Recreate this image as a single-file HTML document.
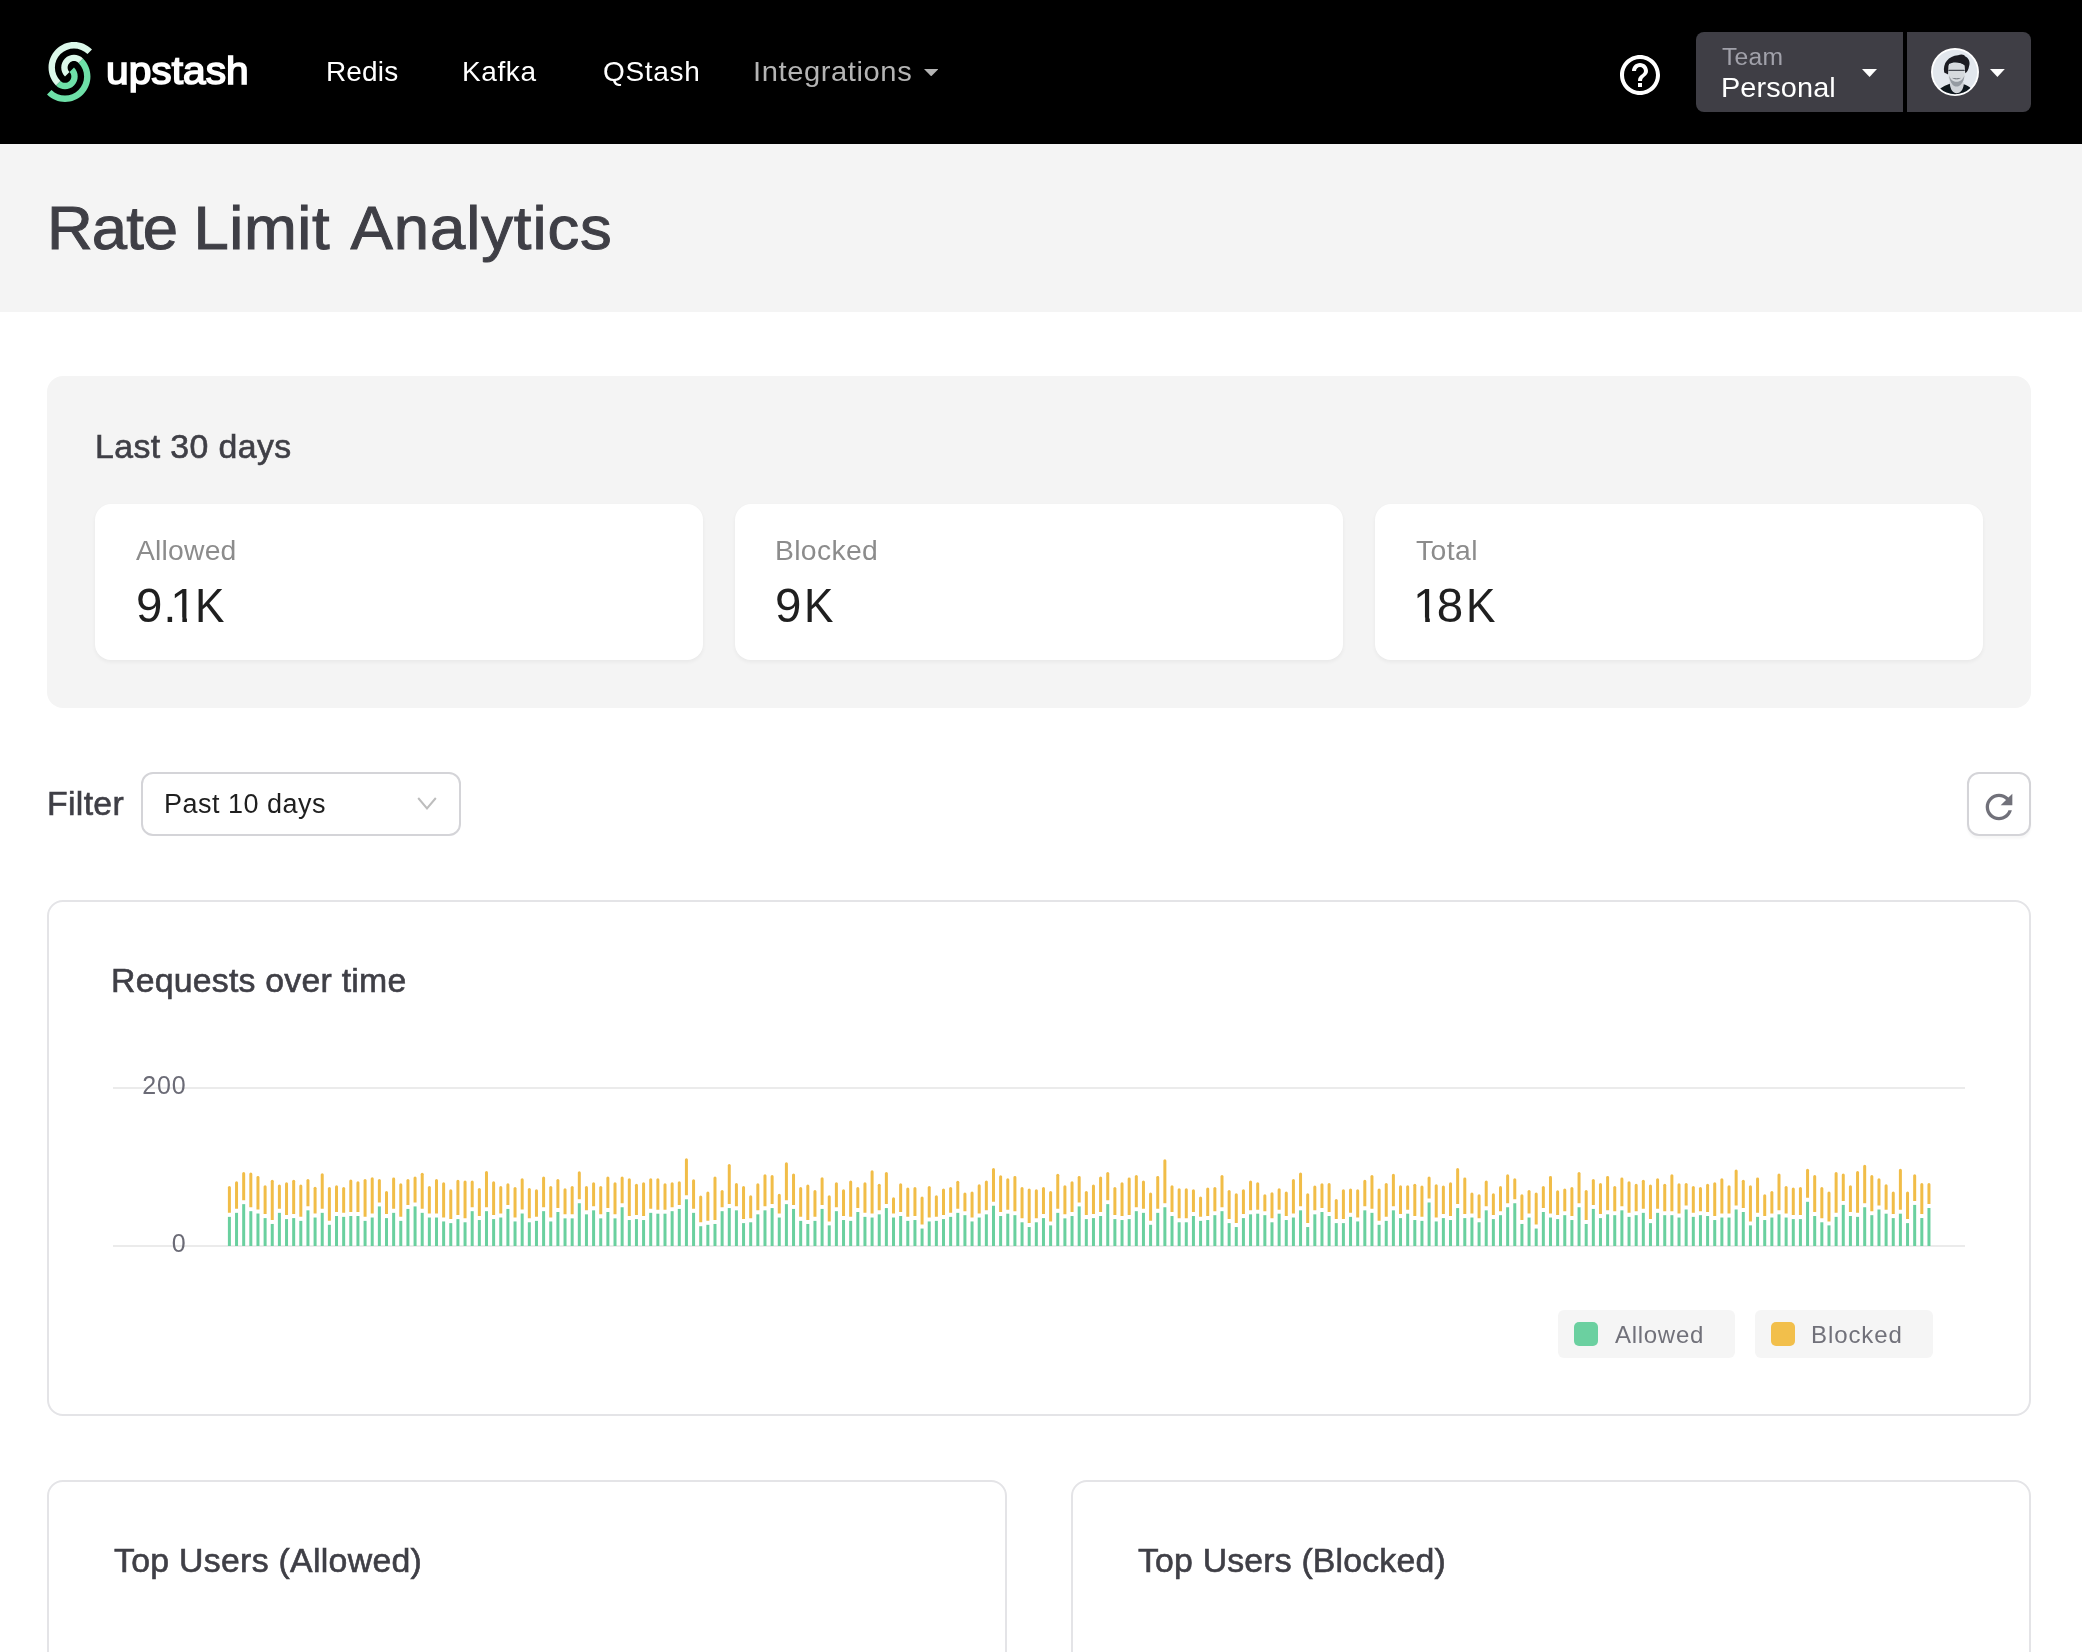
<!DOCTYPE html>
<html lang="en">
<head>
<meta charset="utf-8">
<title>Rate Limit Analytics</title>
<style>
*{box-sizing:border-box;margin:0;padding:0}
html,body{width:2082px;height:1652px;overflow:hidden;background:#fff}
body{font-family:"Liberation Sans",Arial,sans-serif;color:#3f3f46;position:relative}
.abs{position:absolute;white-space:nowrap;line-height:1;will-change:transform}
#nav{position:absolute;left:0;top:0;width:2082px;height:144px;background:#000}
#hdr{position:absolute;left:0;top:144px;width:2082px;height:168px;background:#f4f4f4}
#panel{position:absolute;left:47px;top:376px;width:1984px;height:332px;background:#f4f4f4;border-radius:16px}
.card{position:absolute;top:504px;width:608px;height:156px;background:#fff;border-radius:16px;box-shadow:0 2px 4px rgba(0,0,0,.05)}
.cval{font-size:47.5px;color:#1f1f1f;top:581.8px}
#v1a{letter-spacing:.9px}#v1b{letter-spacing:-6.4px}#v1c{letter-spacing:-1.9px}
#v2a{letter-spacing:2.7px}
#v3a{letter-spacing:-2.8px}#v3b{letter-spacing:2.5px}
#v1d,#v2b,#v3c{display:inline-block;transform:scaleX(.93);transform-origin:0 0}
#v1c,#v3a{display:inline-block;clip-path:polygon(0 0,100% 0,100% 35.4px,16.8px 35.4px,16.8px 100%,12.2px 100%,12.2px 35.4px,0 35.4px)}
.box{position:absolute;border:2px solid #e4e4e7;border-radius:16px;background:#fff}
.leg{position:absolute;top:1310px;height:48px;background:#f5f5f5;border-radius:6px}
.sw{position:absolute;left:16px;top:12px;width:24px;height:24px;border-radius:5px}
h1,h2,h3{font-weight:400}a{text-decoration:none}
</style>
</head>
<body>
<header id="nav">
<svg class="abs" style="left:47px;top:42px" width="45" height="60" viewBox="0 0 256 341">
<path d="M0 298.417c56.554 56.553 148.247 56.553 204.801 0 56.554-56.554 56.554-148.247 0-204.801l-25.6 25.6c42.415 42.416 42.415 111.185 0 153.6-42.416 42.416-111.185 42.416-153.601 0L0 298.416Z" fill="#6ee0a8"/>
<path d="M51.2 247.216c28.277 28.277 74.123 28.277 102.4 0 28.277-28.276 28.277-74.123 0-102.4l-25.6 25.6c14.14 14.138 14.14 37.061 0 51.2-14.138 14.139-37.061 14.139-51.2 0l-25.6 25.6Z" fill="#6ee0a8"/>
<path d="M256 42.415c-56.554-56.553-148.247-56.553-204.8 0-56.555 56.555-56.555 148.247 0 204.801l25.599-25.6c-42.415-42.415-42.415-111.185 0-153.6 42.416-42.416 111.185-42.416 153.6 0L256 42.416Z" fill="#dcf8ea"/>
<path d="M204.8 93.616c-28.276-28.277-74.124-28.277-102.4 0-28.278 28.277-28.278 74.123 0 102.4l25.6-25.6c-14.14-14.138-14.14-37.061 0-51.2 14.138-14.139 37.06-14.139 51.2 0l25.6-25.6Z" fill="#dcf8ea"/>
</svg>
<a class="abs" id="t_brand" style="left:106.00px;top:51.83px;font-size:38px;color:#fff;letter-spacing:0.03px;transform:scaleX(1.07);transform-origin:0 0;-webkit-text-stroke:1.6px #fff">upstash</a>
<nav>
<a class="abs" id="t_Redis" style="left:326.40px;top:57.80px;font-size:28px;color:#fff;letter-spacing:0.15px">Redis</a>
<a class="abs" id="t_Kafka" style="left:462.20px;top:57.80px;font-size:28px;color:#fff;letter-spacing:0.60px">Kafka</a>
<a class="abs" id="t_QStash" style="left:602.80px;top:57.80px;font-size:28px;color:#fff;letter-spacing:0.67px">QStash</a>
<a class="abs" id="t_Integr" style="left:753.40px;top:57.80px;font-size:28px;color:#b4b4b4;letter-spacing:0.57px;transform:scaleX(1.04);transform-origin:0 0">Integrations</a>
<svg class="abs" style="left:923.9px;top:68.8px" width="14.4" height="7.3" viewBox="0 0 14.4 7.3"><path d="M0 0H14.4L7.20 7.3z" fill="#b4b4b4"/></svg>
</nav>
<svg class="abs" style="left:1616px;top:51px" width="48" height="48" viewBox="0 0 24 24"><path fill="#fff" d="M11 18h2v-2h-2v2zm1-16C6.480 2 2 6.480 2 12s4.480 10 10 10 10-4.480 10-10S17.520 2 12 2zm0 18c-4.410 0-8-3.590-8-8s3.590-8 8-8 8 3.590 8 8-3.590 8-8 8zm0-14c-2.210 0-4 1.790-4 4h2c0-1.100.9-2 2-2s2 .9 2 2c0 2-3 1.750-3 5h2c0-2.250 3-2.500 3-5 0-2.210-1.790-4-4-4z"/></svg>
<div class="abs" style="left:1696px;top:32px;width:207px;height:80px;background:#3f3e45;border-radius:8px 0 0 8px"></div>
<span class="abs" id="t_Team" style="left:1721.80px;top:45.61px;font-size:23.5px;color:#a1a1aa;letter-spacing:0.24px;transform:scaleX(1.05);transform-origin:0 0">Team</span>
<span class="abs" id="t_Personal" style="left:1720.60px;top:74.32px;font-size:27.5px;color:#fff;letter-spacing:0.11px;transform:scaleX(1.05);transform-origin:0 0">Personal</span>
<svg class="abs" style="left:1861.5px;top:68.5px" width="15.1" height="7.9" viewBox="0 0 15.1 7.9"><path d="M0 0H15.1L7.55 7.9z" fill="#fff"/></svg>
<div class="abs" style="left:1907px;top:32px;width:124px;height:80px;background:#3f3e45;border-radius:0 8px 8px 0"></div>
<svg class="abs" style="left:1931px;top:48px" width="48" height="48" viewBox="0 0 48 48">
<defs><clipPath id="av"><circle cx="24" cy="24" r="22.2"/></clipPath><filter id="bl" x="-20%" y="-20%" width="140%" height="140%"><feGaussianBlur stdDeviation=".65"/></filter></defs>
<circle cx="24" cy="24" r="24" fill="#fff"/>
<g clip-path="url(#av)">
<rect width="48" height="48" fill="#e2e7ed"/>
<g filter="url(#bl)">
<path d="M18.500 34 L32.500 34 L33.500 44 C29 47 22 47 17.500 44Z" fill="#cfd3d8"/>
<path d="M5 49 C6 41.500 12 38 18.800 35.800 C19.500 42 22 45.200 25.500 45.200 C29 45.200 32.300 42 32.800 36.200 C38.500 38 42.500 41.500 43.500 49Z" fill="#0f141a"/>
<path d="M13.200 24.500 C11.500 15 17.500 8.200 27 7.300 C31 5.800 33.500 7 34 8.300 C38 10 39.500 14.500 38 18.500 C37.500 21.500 36 24.500 34.300 25.300 L33.300 17.500 C30 14 22 13.500 18 16 L17.200 26.500 Z" fill="#1b1e24"/>
<path d="M17.500 17.500 C20 14 30.500 14 33.500 17.500 L33.600 27 C33.600 34 29 38.600 25.300 38.600 C21.500 38.600 17.400 34 17.400 27 Z" fill="#d6dade"/>
<path d="M18 27.500 C19 35.500 22.500 38.600 25.400 38.600 C29 38.600 32.800 35 33.400 27.500 C31.500 32.500 28.500 33.800 25.600 33.800 C22.500 33.800 20 32.500 18 27.500Z" fill="#7f858d" opacity=".75"/>
<path d="M21 29.800 C23.500 31.800 27.500 31.800 30 29.800 C28 30.600 23 30.600 21 29.800Z" fill="#5d636b"/>
<rect x="17.300" y="21.700" width="16.400" height="1.300" rx=".5" fill="#4a4e55"/>

</g></g></svg>
<svg class="abs" style="left:1989.5px;top:68.5px" width="14.8" height="7.9" viewBox="0 0 14.8 7.9"><path d="M0 0H14.8L7.40 7.9z" fill="#fff"/></svg>
</header>
<div id="hdr"></div>
<h1 class="abs" id="t_title" style="left:46.60px;top:198.36px;font-size:61px;color:#3f3f46;letter-spacing:0.66px;transform:scaleX(1.04);transform-origin:0 0;-webkit-text-stroke:1.0px #3f3f46"><span style="letter-spacing:-0.94px">Rate</span> <span style="letter-spacing:0.54px;margin-left:-1.92px">Limit</span> <span style="letter-spacing:0.90px;margin-left:1.92px">Analytics</span></h1>
<main>
<section>
<div id="panel"></div>
<h2 class="abs" id="t_last30" style="left:95.00px;top:431.39px;font-size:32.5px;color:#3f3f46;letter-spacing:0.40px;transform:scaleX(1.04);transform-origin:0 0;-webkit-text-stroke:0.6px #3f3f46">Last 30 days</h2>
<div class="card" style="left:95px"></div>
<div class="abs" id="t_Allowed" style="left:136.40px;top:536.52px;font-size:27.5px;color:#8c8c8c;letter-spacing:0.19px;transform:scaleX(1.03);transform-origin:0 0">Allowed</div>
<div class="abs cval" id="v1" style="left:135.6px"><span id="v1a">9</span><span id="v1b">.</span><span id="v1c">1</span><span id="v1d">K</span></div>
<div class="card" style="left:735px"></div>
<div class="abs" id="t_Blocked" style="left:774.60px;top:536.52px;font-size:27.5px;color:#8c8c8c;letter-spacing:0.33px;transform:scaleX(1.03);transform-origin:0 0">Blocked</div>
<div class="abs cval" id="v2" style="left:775.3px"><span id="v2a">9</span><span id="v2b">K</span></div>
<div class="card" style="left:1375px"></div>
<div class="abs" id="t_Total" style="left:1415.80px;top:536.52px;font-size:27.5px;color:#8c8c8c;letter-spacing:0.41px;transform:scaleX(1.03);transform-origin:0 0">Total</div>
<div class="abs cval" id="v3" style="left:1413px"><span id="v3a">1</span><span id="v3b">8</span><span id="v3c">K</span></div>
</section>
<section>
<label class="abs" id="t_Filter" style="left:46.80px;top:787.89px;font-size:32.5px;color:#3f3f46;letter-spacing:0.31px;transform:scaleX(1.04);transform-origin:0 0;-webkit-text-stroke:0.6px #3f3f46">Filter</label>
<div class="box" style="left:141px;top:772px;width:320px;height:64px;border-color:#d4d4d8;border-radius:12px"></div>
<span class="abs" id="t_Past" style="left:164.40px;top:791.04px;font-size:27px;color:#1f1f1f;letter-spacing:0.50px">Past 10 days</span>
<svg class="abs" style="left:416.8px;top:797.2px" width="21" height="15" viewBox="0 0 21 15"><path d="M1.2 1 L10 11.5 L18.8 1" fill="none" stroke="#bdbdbd" stroke-width="2" stroke-linejoin="miter"/></svg>
<div class="box" style="left:1967px;top:772px;width:64px;height:64px;border-color:#d4d4d8;border-radius:12px;box-shadow:0 3px 2px rgba(0,0,0,.03)"></div>
<svg class="abs" style="left:1979px;top:787px" width="40" height="40" viewBox="0 0 24 24"><path fill="#71717a" d="M17.65 6.35C16.2 4.9 14.21 4 12 4c-4.420 0-7.990 3.580-7.990 8s3.570 8 7.990 8c3.730 0 6.840-2.550 7.730-6h-2.080c-.82 2.330-3.040 4-5.650 4-3.310 0-6-2.690-6-6s2.690-6 6-6c1.660 0 3.140.69 4.220 1.780L13 11h7V4l-2.350 2.350z"/></svg>
</section>
<section>
<div class="box" style="left:47px;top:900px;width:1984px;height:516px"></div>
<h2 class="abs" id="t_Requests" style="left:111.20px;top:965.39px;font-size:32.5px;color:#3f3f46;letter-spacing:0.23px;transform:scaleX(1.04);transform-origin:0 0;-webkit-text-stroke:0.6px #3f3f46">Requests over time</h2>
<svg class="abs" id="chart" style="left:0;top:1040px" width="2082" height="260" viewBox="0 1040 2082 260">
<rect x="113" y="1087" width="1852" height="2" fill="#ebebeb"/>
<rect x="113" y="1245" width="1852" height="2" fill="#ebebeb"/>
<text x="186.6" y="1094.4" text-anchor="end" font-size="25" fill="#6b6b76" letter-spacing="0.9">200</text>
<text x="185.7" y="1252.3" text-anchor="end" font-size="25" fill="#6b6b76">0</text>
<g id="bars"><g fill="#6ad09f"><rect x="227.90" y="1216.86" width="3" height="29.14"/><rect x="235.04" y="1212.84" width="3" height="33.16"/><rect x="242.18" y="1204.15" width="3" height="41.85"/><rect x="249.32" y="1211.17" width="3" height="34.83"/><rect x="256.46" y="1213.51" width="3" height="32.49"/><rect x="263.61" y="1218.11" width="3" height="27.89"/><rect x="270.75" y="1223.96" width="3" height="22.04"/><rect x="277.89" y="1212.84" width="3" height="33.16"/><rect x="285.03" y="1219.11" width="3" height="26.89"/><rect x="292.17" y="1218.11" width="3" height="27.89"/><rect x="299.31" y="1220.87" width="3" height="25.13"/><rect x="306.45" y="1210.34" width="3" height="35.66"/><rect x="313.59" y="1217.52" width="3" height="28.48"/><rect x="320.73" y="1212.84" width="3" height="33.16"/><rect x="327.87" y="1224.80" width="3" height="21.20"/><rect x="335.01" y="1216.02" width="3" height="29.98"/><rect x="342.16" y="1216.86" width="3" height="29.14"/><rect x="349.30" y="1216.02" width="3" height="29.98"/><rect x="356.44" y="1216.02" width="3" height="29.98"/><rect x="363.58" y="1220.87" width="3" height="25.13"/><rect x="370.72" y="1217.52" width="3" height="28.48"/><rect x="377.86" y="1206.41" width="3" height="39.59"/><rect x="385.00" y="1218.11" width="3" height="27.89"/><rect x="392.14" y="1212.84" width="3" height="33.16"/><rect x="399.28" y="1220.87" width="3" height="25.13"/><rect x="406.43" y="1208.92" width="3" height="37.08"/><rect x="413.57" y="1206.41" width="3" height="39.59"/><rect x="420.71" y="1212.84" width="3" height="33.16"/><rect x="427.85" y="1217.52" width="3" height="28.48"/><rect x="434.99" y="1217.52" width="3" height="28.48"/><rect x="442.13" y="1221.45" width="3" height="24.55"/><rect x="449.27" y="1223.12" width="3" height="22.88"/><rect x="456.41" y="1219.11" width="3" height="26.89"/><rect x="463.55" y="1222.29" width="3" height="23.71"/><rect x="470.69" y="1211.17" width="3" height="34.83"/><rect x="477.84" y="1220.03" width="3" height="25.97"/><rect x="484.98" y="1211.17" width="3" height="34.83"/><rect x="492.12" y="1219.11" width="3" height="26.89"/><rect x="499.26" y="1217.52" width="3" height="28.48"/><rect x="506.40" y="1208.92" width="3" height="37.08"/><rect x="513.54" y="1221.45" width="3" height="24.55"/><rect x="520.68" y="1213.51" width="3" height="32.49"/><rect x="527.82" y="1222.29" width="3" height="23.71"/><rect x="534.96" y="1220.87" width="3" height="25.13"/><rect x="542.10" y="1211.17" width="3" height="34.83"/><rect x="549.25" y="1221.45" width="3" height="24.55"/><rect x="556.39" y="1212.01" width="3" height="33.99"/><rect x="563.53" y="1218.36" width="3" height="27.64"/><rect x="570.67" y="1218.36" width="3" height="27.64"/><rect x="577.81" y="1203.23" width="3" height="42.77"/><rect x="584.95" y="1214.35" width="3" height="31.65"/><rect x="592.09" y="1210.34" width="3" height="35.66"/><rect x="599.23" y="1218.36" width="3" height="27.64"/><rect x="606.37" y="1212.01" width="3" height="33.99"/><rect x="613.51" y="1218.36" width="3" height="27.64"/><rect x="620.65" y="1207.25" width="3" height="38.75"/><rect x="627.80" y="1220.03" width="3" height="25.97"/><rect x="634.94" y="1219.11" width="3" height="26.89"/><rect x="642.08" y="1220.03" width="3" height="25.97"/><rect x="649.22" y="1212.84" width="3" height="33.16"/><rect x="656.36" y="1213.68" width="3" height="32.32"/><rect x="663.50" y="1213.68" width="3" height="32.32"/><rect x="670.64" y="1211.17" width="3" height="34.83"/><rect x="677.78" y="1208.92" width="3" height="37.08"/><rect x="684.92" y="1199.31" width="3" height="46.69"/><rect x="692.07" y="1212.84" width="3" height="33.16"/><rect x="699.21" y="1226.22" width="3" height="19.78"/><rect x="706.35" y="1224.80" width="3" height="21.20"/><rect x="713.49" y="1223.96" width="3" height="22.04"/><rect x="720.63" y="1211.17" width="3" height="34.83"/><rect x="727.77" y="1208.08" width="3" height="37.92"/><rect x="734.91" y="1210.34" width="3" height="35.66"/><rect x="742.05" y="1223.12" width="3" height="22.88"/><rect x="749.19" y="1222.29" width="3" height="23.71"/><rect x="756.33" y="1214.35" width="3" height="31.65"/><rect x="763.48" y="1210.34" width="3" height="35.66"/><rect x="770.62" y="1208.08" width="3" height="37.92"/><rect x="777.76" y="1217.52" width="3" height="28.48"/><rect x="784.90" y="1204.15" width="3" height="41.85"/><rect x="792.04" y="1208.92" width="3" height="37.08"/><rect x="799.18" y="1220.87" width="3" height="25.13"/><rect x="806.32" y="1223.96" width="3" height="22.04"/><rect x="813.46" y="1220.87" width="3" height="25.13"/><rect x="820.60" y="1208.92" width="3" height="37.08"/><rect x="827.74" y="1225.38" width="3" height="20.62"/><rect x="834.88" y="1211.17" width="3" height="34.83"/><rect x="842.03" y="1220.03" width="3" height="25.97"/><rect x="849.17" y="1220.87" width="3" height="25.13"/><rect x="856.31" y="1212.01" width="3" height="33.99"/><rect x="863.45" y="1216.86" width="3" height="29.14"/><rect x="870.59" y="1217.52" width="3" height="28.48"/><rect x="877.73" y="1214.35" width="3" height="31.65"/><rect x="884.87" y="1208.08" width="3" height="37.92"/><rect x="892.01" y="1217.52" width="3" height="28.48"/><rect x="899.15" y="1216.02" width="3" height="29.98"/><rect x="906.29" y="1220.87" width="3" height="25.13"/><rect x="913.44" y="1220.03" width="3" height="25.97"/><rect x="920.58" y="1228.56" width="3" height="17.44"/><rect x="927.72" y="1221.45" width="3" height="24.55"/><rect x="934.86" y="1220.87" width="3" height="25.13"/><rect x="942.00" y="1219.11" width="3" height="26.89"/><rect x="949.14" y="1216.86" width="3" height="29.14"/><rect x="956.28" y="1212.84" width="3" height="33.16"/><rect x="963.42" y="1215.18" width="3" height="30.82"/><rect x="970.56" y="1221.45" width="3" height="24.55"/><rect x="977.70" y="1217.52" width="3" height="28.48"/><rect x="984.85" y="1214.35" width="3" height="31.65"/><rect x="991.99" y="1205.74" width="3" height="40.26"/><rect x="999.13" y="1216.02" width="3" height="29.98"/><rect x="1006.27" y="1213.68" width="3" height="32.32"/><rect x="1013.41" y="1215.18" width="3" height="30.82"/><rect x="1020.55" y="1222.29" width="3" height="23.71"/><rect x="1027.69" y="1227.05" width="3" height="18.95"/><rect x="1034.83" y="1222.29" width="3" height="23.71"/><rect x="1041.97" y="1218.11" width="3" height="27.89"/><rect x="1049.12" y="1225.38" width="3" height="20.62"/><rect x="1056.26" y="1212.84" width="3" height="33.16"/><rect x="1063.40" y="1218.36" width="3" height="27.64"/><rect x="1070.54" y="1216.02" width="3" height="29.98"/><rect x="1077.68" y="1206.41" width="3" height="39.59"/><rect x="1084.82" y="1219.11" width="3" height="26.89"/><rect x="1091.96" y="1218.11" width="3" height="27.89"/><rect x="1099.10" y="1216.02" width="3" height="29.98"/><rect x="1106.24" y="1204.15" width="3" height="41.85"/><rect x="1113.38" y="1219.11" width="3" height="26.89"/><rect x="1120.53" y="1220.03" width="3" height="25.97"/><rect x="1127.67" y="1219.11" width="3" height="26.89"/><rect x="1134.81" y="1211.17" width="3" height="34.83"/><rect x="1141.95" y="1212.84" width="3" height="33.16"/><rect x="1149.09" y="1224.80" width="3" height="21.20"/><rect x="1156.23" y="1212.84" width="3" height="33.16"/><rect x="1163.37" y="1207.25" width="3" height="38.75"/><rect x="1170.51" y="1216.02" width="3" height="29.98"/><rect x="1177.65" y="1222.29" width="3" height="23.71"/><rect x="1184.79" y="1222.29" width="3" height="23.71"/><rect x="1191.93" y="1216.02" width="3" height="29.98"/><rect x="1199.08" y="1220.87" width="3" height="25.13"/><rect x="1206.22" y="1220.03" width="3" height="25.97"/><rect x="1213.36" y="1215.18" width="3" height="30.82"/><rect x="1220.50" y="1211.17" width="3" height="34.83"/><rect x="1227.64" y="1223.12" width="3" height="22.88"/><rect x="1234.78" y="1227.05" width="3" height="18.95"/><rect x="1241.92" y="1218.11" width="3" height="27.89"/><rect x="1249.06" y="1214.35" width="3" height="31.65"/><rect x="1256.20" y="1213.68" width="3" height="32.32"/><rect x="1263.35" y="1215.18" width="3" height="30.82"/><rect x="1270.49" y="1222.29" width="3" height="23.71"/><rect x="1277.63" y="1213.68" width="3" height="32.32"/><rect x="1284.77" y="1220.03" width="3" height="25.97"/><rect x="1291.91" y="1217.52" width="3" height="28.48"/><rect x="1299.05" y="1210.34" width="3" height="35.66"/><rect x="1306.19" y="1227.05" width="3" height="18.95"/><rect x="1313.33" y="1214.35" width="3" height="31.65"/><rect x="1320.47" y="1212.01" width="3" height="33.99"/><rect x="1327.61" y="1216.02" width="3" height="29.98"/><rect x="1334.76" y="1223.12" width="3" height="22.88"/><rect x="1341.90" y="1223.12" width="3" height="22.88"/><rect x="1349.04" y="1216.86" width="3" height="29.14"/><rect x="1356.18" y="1221.45" width="3" height="24.55"/><rect x="1363.32" y="1210.34" width="3" height="35.66"/><rect x="1370.46" y="1212.84" width="3" height="33.16"/><rect x="1377.60" y="1224.80" width="3" height="21.20"/><rect x="1384.74" y="1220.87" width="3" height="25.13"/><rect x="1391.88" y="1210.34" width="3" height="35.66"/><rect x="1399.02" y="1218.11" width="3" height="27.89"/><rect x="1406.17" y="1213.68" width="3" height="32.32"/><rect x="1413.31" y="1220.03" width="3" height="25.97"/><rect x="1420.45" y="1220.87" width="3" height="25.13"/><rect x="1427.59" y="1202.48" width="3" height="43.52"/><rect x="1434.73" y="1221.45" width="3" height="24.55"/><rect x="1441.87" y="1218.11" width="3" height="27.89"/><rect x="1449.01" y="1220.03" width="3" height="25.97"/><rect x="1456.15" y="1208.08" width="3" height="37.92"/><rect x="1463.29" y="1218.11" width="3" height="27.89"/><rect x="1470.43" y="1217.52" width="3" height="28.48"/><rect x="1477.58" y="1222.29" width="3" height="23.71"/><rect x="1484.72" y="1210.34" width="3" height="35.66"/><rect x="1491.86" y="1219.11" width="3" height="26.89"/><rect x="1499.00" y="1215.18" width="3" height="30.82"/><rect x="1506.14" y="1207.25" width="3" height="38.75"/><rect x="1513.28" y="1203.23" width="3" height="42.77"/><rect x="1520.42" y="1223.96" width="3" height="22.04"/><rect x="1527.56" y="1217.52" width="3" height="28.48"/><rect x="1534.70" y="1228.56" width="3" height="17.44"/><rect x="1541.84" y="1212.01" width="3" height="33.99"/><rect x="1548.99" y="1217.52" width="3" height="28.48"/><rect x="1556.13" y="1219.11" width="3" height="26.89"/><rect x="1563.27" y="1215.18" width="3" height="30.82"/><rect x="1570.41" y="1220.03" width="3" height="25.97"/><rect x="1577.55" y="1207.25" width="3" height="38.75"/><rect x="1584.69" y="1223.96" width="3" height="22.04"/><rect x="1591.83" y="1208.92" width="3" height="37.08"/><rect x="1598.97" y="1218.11" width="3" height="27.89"/><rect x="1606.11" y="1214.35" width="3" height="31.65"/><rect x="1613.25" y="1215.18" width="3" height="30.82"/><rect x="1620.39" y="1210.34" width="3" height="35.66"/><rect x="1627.54" y="1216.86" width="3" height="29.14"/><rect x="1634.68" y="1215.18" width="3" height="30.82"/><rect x="1641.82" y="1212.84" width="3" height="33.16"/><rect x="1648.96" y="1223.12" width="3" height="22.88"/><rect x="1656.10" y="1212.84" width="3" height="33.16"/><rect x="1663.24" y="1215.18" width="3" height="30.82"/><rect x="1670.38" y="1215.18" width="3" height="30.82"/><rect x="1677.52" y="1217.52" width="3" height="28.48"/><rect x="1684.66" y="1209.50" width="3" height="36.50"/><rect x="1691.81" y="1216.86" width="3" height="29.14"/><rect x="1698.95" y="1215.18" width="3" height="30.82"/><rect x="1706.09" y="1216.02" width="3" height="29.98"/><rect x="1713.23" y="1220.03" width="3" height="25.97"/><rect x="1720.37" y="1217.52" width="3" height="28.48"/><rect x="1727.51" y="1217.52" width="3" height="28.48"/><rect x="1734.65" y="1209.50" width="3" height="36.50"/><rect x="1741.79" y="1212.01" width="3" height="33.99"/><rect x="1748.93" y="1225.38" width="3" height="20.62"/><rect x="1756.07" y="1216.86" width="3" height="29.14"/><rect x="1763.22" y="1220.03" width="3" height="25.97"/><rect x="1770.36" y="1217.52" width="3" height="28.48"/><rect x="1777.50" y="1214.35" width="3" height="31.65"/><rect x="1784.64" y="1217.52" width="3" height="28.48"/><rect x="1791.78" y="1219.11" width="3" height="26.89"/><rect x="1798.92" y="1219.11" width="3" height="26.89"/><rect x="1806.06" y="1201.81" width="3" height="44.19"/><rect x="1813.20" y="1216.02" width="3" height="29.98"/><rect x="1820.34" y="1222.29" width="3" height="23.71"/><rect x="1827.48" y="1225.38" width="3" height="20.62"/><rect x="1834.62" y="1216.86" width="3" height="29.14"/><rect x="1841.77" y="1204.91" width="3" height="41.09"/><rect x="1848.91" y="1216.02" width="3" height="29.98"/><rect x="1856.05" y="1216.86" width="3" height="29.14"/><rect x="1863.19" y="1207.25" width="3" height="38.75"/><rect x="1870.33" y="1215.18" width="3" height="30.82"/><rect x="1877.47" y="1209.50" width="3" height="36.50"/><rect x="1884.61" y="1213.68" width="3" height="32.32"/><rect x="1891.75" y="1218.11" width="3" height="27.89"/><rect x="1898.89" y="1213.68" width="3" height="32.32"/><rect x="1906.04" y="1223.12" width="3" height="22.88"/><rect x="1913.18" y="1204.91" width="3" height="41.09"/><rect x="1920.32" y="1218.03" width="3" height="27.97"/><rect x="1927.46" y="1208.00" width="3" height="38.00"/></g>
<g fill="#f1bd48"><path d="M227.90 1212.86V1187.60a1.5 1.5 0 0 1 3 0V1212.86z"/><path d="M235.04 1208.84V1182.84a1.5 1.5 0 0 1 3 0V1208.84z"/><path d="M242.18 1200.15V1173.40a1.5 1.5 0 0 1 3 0V1200.15z"/><path d="M249.32 1207.17V1174.06a1.5 1.5 0 0 1 3 0V1207.17z"/><path d="M256.46 1209.51V1177.41a1.5 1.5 0 0 1 3 0V1209.51z"/><path d="M263.61 1214.11V1186.77a1.5 1.5 0 0 1 3 0V1214.11z"/><path d="M270.75 1219.96V1181.33a1.5 1.5 0 0 1 3 0V1219.96z"/><path d="M277.89 1208.84V1185.93a1.5 1.5 0 0 1 3 0V1208.84z"/><path d="M285.03 1215.11V1183.67a1.5 1.5 0 0 1 3 0V1215.11z"/><path d="M292.17 1214.11V1181.33a1.5 1.5 0 0 1 3 0V1214.11z"/><path d="M299.31 1216.87V1186.01a1.5 1.5 0 0 1 3 0V1216.87z"/><path d="M306.45 1206.34V1180.50a1.5 1.5 0 0 1 3 0V1206.34z"/><path d="M313.59 1213.52V1188.27a1.5 1.5 0 0 1 3 0V1213.52z"/><path d="M320.73 1208.84V1174.73a1.5 1.5 0 0 1 3 0V1208.84z"/><path d="M327.87 1220.80V1188.44a1.5 1.5 0 0 1 3 0V1220.80z"/><path d="M335.01 1212.02V1186.77a1.5 1.5 0 0 1 3 0V1212.02z"/><path d="M342.16 1212.86V1188.44a1.5 1.5 0 0 1 3 0V1212.86z"/><path d="M349.30 1212.02V1180.92a1.5 1.5 0 0 1 3 0V1212.02z"/><path d="M356.44 1212.02V1182.84a1.5 1.5 0 0 1 3 0V1212.02z"/><path d="M363.58 1216.87V1180.50a1.5 1.5 0 0 1 3 0V1216.87z"/><path d="M370.72 1213.52V1178.74a1.5 1.5 0 0 1 3 0V1213.52z"/><path d="M377.86 1202.41V1180.50a1.5 1.5 0 0 1 3 0V1202.41z"/><path d="M385.00 1214.11V1192.45a1.5 1.5 0 0 1 3 0V1214.11z"/><path d="M392.14 1208.84V1178.91a1.5 1.5 0 0 1 3 0V1208.84z"/><path d="M399.28 1216.87V1184.68a1.5 1.5 0 0 1 3 0V1216.87z"/><path d="M406.43 1204.92V1180.50a1.5 1.5 0 0 1 3 0V1204.92z"/><path d="M413.57 1202.41V1178.08a1.5 1.5 0 0 1 3 0V1202.41z"/><path d="M420.71 1208.84V1174.23a1.5 1.5 0 0 1 3 0V1208.84z"/><path d="M427.85 1213.52V1187.60a1.5 1.5 0 0 1 3 0V1213.52z"/><path d="M434.99 1213.52V1180.50a1.5 1.5 0 0 1 3 0V1213.52z"/><path d="M442.13 1217.45V1183.67a1.5 1.5 0 0 1 3 0V1217.45z"/><path d="M449.27 1219.12V1190.78a1.5 1.5 0 0 1 3 0V1219.12z"/><path d="M456.41 1215.11V1181.33a1.5 1.5 0 0 1 3 0V1215.11z"/><path d="M463.55 1218.29V1182.00a1.5 1.5 0 0 1 3 0V1218.29z"/><path d="M470.69 1207.17V1182.00a1.5 1.5 0 0 1 3 0V1207.17z"/><path d="M477.84 1216.03V1189.52a1.5 1.5 0 0 1 3 0V1216.03z"/><path d="M484.98 1207.17V1172.56a1.5 1.5 0 0 1 3 0V1207.17z"/><path d="M492.12 1215.11V1182.84a1.5 1.5 0 0 1 3 0V1215.11z"/><path d="M499.26 1213.52V1187.60a1.5 1.5 0 0 1 3 0V1213.52z"/><path d="M506.40 1204.92V1184.68a1.5 1.5 0 0 1 3 0V1204.92z"/><path d="M513.54 1217.45V1188.44a1.5 1.5 0 0 1 3 0V1217.45z"/><path d="M520.68 1209.51V1179.75a1.5 1.5 0 0 1 3 0V1209.51z"/><path d="M527.82 1218.29V1189.52a1.5 1.5 0 0 1 3 0V1218.29z"/><path d="M534.96 1216.87V1190.78a1.5 1.5 0 0 1 3 0V1216.87z"/><path d="M542.10 1207.17V1178.08a1.5 1.5 0 0 1 3 0V1207.17z"/><path d="M549.25 1217.45V1187.60a1.5 1.5 0 0 1 3 0V1217.45z"/><path d="M556.39 1208.01V1180.50a1.5 1.5 0 0 1 3 0V1208.01z"/><path d="M563.53 1214.36V1189.78a1.5 1.5 0 0 1 3 0V1214.36z"/><path d="M570.67 1214.36V1187.60a1.5 1.5 0 0 1 3 0V1214.36z"/><path d="M577.81 1199.23V1172.81a1.5 1.5 0 0 1 3 0V1199.23z"/><path d="M584.95 1210.35V1187.60a1.5 1.5 0 0 1 3 0V1210.35z"/><path d="M592.09 1206.34V1183.67a1.5 1.5 0 0 1 3 0V1206.34z"/><path d="M599.23 1214.36V1187.60a1.5 1.5 0 0 1 3 0V1214.36z"/><path d="M606.37 1208.01V1178.08a1.5 1.5 0 0 1 3 0V1208.01z"/><path d="M613.51 1214.36V1183.67a1.5 1.5 0 0 1 3 0V1214.36z"/><path d="M620.65 1203.25V1178.08a1.5 1.5 0 0 1 3 0V1203.25z"/><path d="M627.80 1216.03V1179.75a1.5 1.5 0 0 1 3 0V1216.03z"/><path d="M634.94 1215.11V1185.35a1.5 1.5 0 0 1 3 0V1215.11z"/><path d="M642.08 1216.03V1183.67a1.5 1.5 0 0 1 3 0V1216.03z"/><path d="M649.22 1208.84V1179.75a1.5 1.5 0 0 1 3 0V1208.84z"/><path d="M656.36 1209.68V1179.75a1.5 1.5 0 0 1 3 0V1209.68z"/><path d="M663.50 1209.68V1184.68a1.5 1.5 0 0 1 3 0V1209.68z"/><path d="M670.64 1207.17V1183.67a1.5 1.5 0 0 1 3 0V1207.17z"/><path d="M677.78 1204.92V1182.84a1.5 1.5 0 0 1 3 0V1204.92z"/><path d="M684.92 1195.31V1159.86a1.5 1.5 0 0 1 3 0V1195.31z"/><path d="M692.07 1208.84V1180.75a1.5 1.5 0 0 1 3 0V1208.84z"/><path d="M699.21 1222.22V1197.05a1.5 1.5 0 0 1 3 0V1222.22z"/><path d="M706.35 1220.80V1193.03a1.5 1.5 0 0 1 3 0V1220.80z"/><path d="M713.49 1219.96V1178.08a1.5 1.5 0 0 1 3 0V1219.96z"/><path d="M720.63 1207.17V1191.61a1.5 1.5 0 0 1 3 0V1207.17z"/><path d="M727.77 1204.08V1165.46a1.5 1.5 0 0 1 3 0V1204.08z"/><path d="M734.91 1206.34V1184.51a1.5 1.5 0 0 1 3 0V1206.34z"/><path d="M742.05 1219.12V1187.60a1.5 1.5 0 0 1 3 0V1219.12z"/><path d="M749.19 1218.29V1196.63a1.5 1.5 0 0 1 3 0V1218.29z"/><path d="M756.33 1210.35V1184.68a1.5 1.5 0 0 1 3 0V1210.35z"/><path d="M763.48 1206.34V1175.74a1.5 1.5 0 0 1 3 0V1206.34z"/><path d="M770.62 1204.08V1176.57a1.5 1.5 0 0 1 3 0V1204.08z"/><path d="M777.76 1213.52V1195.37a1.5 1.5 0 0 1 3 0V1213.52z"/><path d="M784.90 1200.15V1163.78a1.5 1.5 0 0 1 3 0V1200.15z"/><path d="M792.04 1204.92V1174.90a1.5 1.5 0 0 1 3 0V1204.92z"/><path d="M799.18 1216.87V1188.44a1.5 1.5 0 0 1 3 0V1216.87z"/><path d="M806.32 1219.96V1186.01a1.5 1.5 0 0 1 3 0V1219.96z"/><path d="M813.46 1216.87V1191.61a1.5 1.5 0 0 1 3 0V1216.87z"/><path d="M820.60 1204.92V1178.74a1.5 1.5 0 0 1 3 0V1204.92z"/><path d="M827.74 1221.38V1196.63a1.5 1.5 0 0 1 3 0V1221.38z"/><path d="M834.88 1207.17V1183.67a1.5 1.5 0 0 1 3 0V1207.17z"/><path d="M842.03 1216.03V1190.78a1.5 1.5 0 0 1 3 0V1216.03z"/><path d="M849.17 1216.87V1182.00a1.5 1.5 0 0 1 3 0V1216.87z"/><path d="M856.31 1208.01V1188.44a1.5 1.5 0 0 1 3 0V1208.01z"/><path d="M863.45 1212.86V1183.67a1.5 1.5 0 0 1 3 0V1212.86z"/><path d="M870.59 1213.52V1171.72a1.5 1.5 0 0 1 3 0V1213.52z"/><path d="M877.73 1210.35V1185.35a1.5 1.5 0 0 1 3 0V1210.35z"/><path d="M884.87 1204.08V1173.40a1.5 1.5 0 0 1 3 0V1204.08z"/><path d="M892.01 1213.52V1198.72a1.5 1.5 0 0 1 3 0V1213.52z"/><path d="M899.15 1212.02V1184.68a1.5 1.5 0 0 1 3 0V1212.02z"/><path d="M906.29 1216.87V1189.11a1.5 1.5 0 0 1 3 0V1216.87z"/><path d="M913.44 1216.03V1188.44a1.5 1.5 0 0 1 3 0V1216.03z"/><path d="M920.58 1224.56V1197.88a1.5 1.5 0 0 1 3 0V1224.56z"/><path d="M927.72 1217.45V1187.60a1.5 1.5 0 0 1 3 0V1217.45z"/><path d="M934.86 1216.87V1196.63a1.5 1.5 0 0 1 3 0V1216.87z"/><path d="M942.00 1215.11V1189.94a1.5 1.5 0 0 1 3 0V1215.11z"/><path d="M949.14 1212.86V1188.44a1.5 1.5 0 0 1 3 0V1212.86z"/><path d="M956.28 1208.84V1182.17a1.5 1.5 0 0 1 3 0V1208.84z"/><path d="M963.42 1211.18V1194.12a1.5 1.5 0 0 1 3 0V1211.18z"/><path d="M970.56 1217.45V1193.03a1.5 1.5 0 0 1 3 0V1217.45z"/><path d="M977.70 1213.52V1185.76a1.5 1.5 0 0 1 3 0V1213.52z"/><path d="M984.85 1210.35V1182.00a1.5 1.5 0 0 1 3 0V1210.35z"/><path d="M991.99 1201.74V1169.47a1.5 1.5 0 0 1 3 0V1201.74z"/><path d="M999.13 1212.02V1176.74a1.5 1.5 0 0 1 3 0V1212.02z"/><path d="M1006.27 1209.68V1179.75a1.5 1.5 0 0 1 3 0V1209.68z"/><path d="M1013.41 1211.18V1177.41a1.5 1.5 0 0 1 3 0V1211.18z"/><path d="M1020.55 1218.29V1188.44a1.5 1.5 0 0 1 3 0V1218.29z"/><path d="M1027.69 1223.05V1189.94a1.5 1.5 0 0 1 3 0V1223.05z"/><path d="M1034.83 1218.29V1190.78a1.5 1.5 0 0 1 3 0V1218.29z"/><path d="M1041.97 1214.11V1188.44a1.5 1.5 0 0 1 3 0V1214.11z"/><path d="M1049.12 1221.38V1192.45a1.5 1.5 0 0 1 3 0V1221.38z"/><path d="M1056.26 1208.84V1175.15a1.5 1.5 0 0 1 3 0V1208.84z"/><path d="M1063.40 1214.36V1186.77a1.5 1.5 0 0 1 3 0V1214.36z"/><path d="M1070.54 1212.02V1182.84a1.5 1.5 0 0 1 3 0V1212.02z"/><path d="M1077.68 1202.41V1177.41a1.5 1.5 0 0 1 3 0V1202.41z"/><path d="M1084.82 1215.11V1192.45a1.5 1.5 0 0 1 3 0V1215.11z"/><path d="M1091.96 1214.11V1186.01a1.5 1.5 0 0 1 3 0V1214.11z"/><path d="M1099.10 1212.02V1178.08a1.5 1.5 0 0 1 3 0V1212.02z"/><path d="M1106.24 1200.15V1173.40a1.5 1.5 0 0 1 3 0V1200.15z"/><path d="M1113.38 1215.11V1188.44a1.5 1.5 0 0 1 3 0V1215.11z"/><path d="M1120.53 1216.03V1183.67a1.5 1.5 0 0 1 3 0V1216.03z"/><path d="M1127.67 1215.11V1178.91a1.5 1.5 0 0 1 3 0V1215.11z"/><path d="M1134.81 1207.17V1176.57a1.5 1.5 0 0 1 3 0V1207.17z"/><path d="M1141.95 1208.84V1182.00a1.5 1.5 0 0 1 3 0V1208.84z"/><path d="M1149.09 1220.80V1194.12a1.5 1.5 0 0 1 3 0V1220.80z"/><path d="M1156.23 1208.84V1177.41a1.5 1.5 0 0 1 3 0V1208.84z"/><path d="M1163.37 1203.25V1160.69a1.5 1.5 0 0 1 3 0V1203.25z"/><path d="M1170.51 1212.02V1186.77a1.5 1.5 0 0 1 3 0V1212.02z"/><path d="M1177.65 1218.29V1189.78a1.5 1.5 0 0 1 3 0V1218.29z"/><path d="M1184.79 1218.29V1189.78a1.5 1.5 0 0 1 3 0V1218.29z"/><path d="M1191.93 1212.02V1190.78a1.5 1.5 0 0 1 3 0V1212.02z"/><path d="M1199.08 1216.87V1197.88a1.5 1.5 0 0 1 3 0V1216.87z"/><path d="M1206.22 1216.03V1189.11a1.5 1.5 0 0 1 3 0V1216.03z"/><path d="M1213.36 1211.18V1188.44a1.5 1.5 0 0 1 3 0V1211.18z"/><path d="M1220.50 1207.17V1176.57a1.5 1.5 0 0 1 3 0V1207.17z"/><path d="M1227.64 1219.12V1191.61a1.5 1.5 0 0 1 3 0V1219.12z"/><path d="M1234.78 1223.05V1194.79a1.5 1.5 0 0 1 3 0V1223.05z"/><path d="M1241.92 1214.11V1190.78a1.5 1.5 0 0 1 3 0V1214.11z"/><path d="M1249.06 1210.35V1182.00a1.5 1.5 0 0 1 3 0V1210.35z"/><path d="M1256.20 1209.68V1183.67a1.5 1.5 0 0 1 3 0V1209.68z"/><path d="M1263.35 1211.18V1195.63a1.5 1.5 0 0 1 3 0V1211.18z"/><path d="M1270.49 1218.29V1193.70a1.5 1.5 0 0 1 3 0V1218.29z"/><path d="M1277.63 1209.68V1189.78a1.5 1.5 0 0 1 3 0V1209.68z"/><path d="M1284.77 1216.03V1193.03a1.5 1.5 0 0 1 3 0V1216.03z"/><path d="M1291.91 1213.52V1180.50a1.5 1.5 0 0 1 3 0V1213.52z"/><path d="M1299.05 1206.34V1174.06a1.5 1.5 0 0 1 3 0V1206.34z"/><path d="M1306.19 1223.05V1194.79a1.5 1.5 0 0 1 3 0V1223.05z"/><path d="M1313.33 1210.35V1187.02a1.5 1.5 0 0 1 3 0V1210.35z"/><path d="M1320.47 1208.01V1184.68a1.5 1.5 0 0 1 3 0V1208.01z"/><path d="M1327.61 1212.02V1184.51a1.5 1.5 0 0 1 3 0V1212.02z"/><path d="M1334.76 1219.12V1200.56a1.5 1.5 0 0 1 3 0V1219.12z"/><path d="M1341.90 1219.12V1190.78a1.5 1.5 0 0 1 3 0V1219.12z"/><path d="M1349.04 1212.86V1189.94a1.5 1.5 0 0 1 3 0V1212.86z"/><path d="M1356.18 1217.45V1190.78a1.5 1.5 0 0 1 3 0V1217.45z"/><path d="M1363.32 1206.34V1181.17a1.5 1.5 0 0 1 3 0V1206.34z"/><path d="M1370.46 1208.84V1176.57a1.5 1.5 0 0 1 3 0V1208.84z"/><path d="M1377.60 1220.80V1189.94a1.5 1.5 0 0 1 3 0V1220.80z"/><path d="M1384.74 1216.87V1184.51a1.5 1.5 0 0 1 3 0V1216.87z"/><path d="M1391.88 1206.34V1175.15a1.5 1.5 0 0 1 3 0V1206.34z"/><path d="M1399.02 1214.11V1186.77a1.5 1.5 0 0 1 3 0V1214.11z"/><path d="M1406.17 1209.68V1186.77a1.5 1.5 0 0 1 3 0V1209.68z"/><path d="M1413.31 1216.03V1185.35a1.5 1.5 0 0 1 3 0V1216.03z"/><path d="M1420.45 1216.87V1187.02a1.5 1.5 0 0 1 3 0V1216.87z"/><path d="M1427.59 1198.48V1178.08a1.5 1.5 0 0 1 3 0V1198.48z"/><path d="M1434.73 1217.45V1185.76a1.5 1.5 0 0 1 3 0V1217.45z"/><path d="M1441.87 1214.11V1187.02a1.5 1.5 0 0 1 3 0V1214.11z"/><path d="M1449.01 1216.03V1183.67a1.5 1.5 0 0 1 3 0V1216.03z"/><path d="M1456.15 1204.08V1169.47a1.5 1.5 0 0 1 3 0V1204.08z"/><path d="M1463.29 1214.11V1178.91a1.5 1.5 0 0 1 3 0V1214.11z"/><path d="M1470.43 1213.52V1194.12a1.5 1.5 0 0 1 3 0V1213.52z"/><path d="M1477.58 1218.29V1195.63a1.5 1.5 0 0 1 3 0V1218.29z"/><path d="M1484.72 1206.34V1182.00a1.5 1.5 0 0 1 3 0V1206.34z"/><path d="M1491.86 1215.11V1194.79a1.5 1.5 0 0 1 3 0V1215.11z"/><path d="M1499.00 1211.18V1187.60a1.5 1.5 0 0 1 3 0V1211.18z"/><path d="M1506.14 1203.25V1175.74a1.5 1.5 0 0 1 3 0V1203.25z"/><path d="M1513.28 1199.23V1179.75a1.5 1.5 0 0 1 3 0V1199.23z"/><path d="M1520.42 1219.96V1195.63a1.5 1.5 0 0 1 3 0V1219.96z"/><path d="M1527.56 1213.52V1191.61a1.5 1.5 0 0 1 3 0V1213.52z"/><path d="M1534.70 1224.56V1193.95a1.5 1.5 0 0 1 3 0V1224.56z"/><path d="M1541.84 1208.01V1187.60a1.5 1.5 0 0 1 3 0V1208.01z"/><path d="M1548.99 1213.52V1177.41a1.5 1.5 0 0 1 3 0V1213.52z"/><path d="M1556.13 1215.11V1191.78a1.5 1.5 0 0 1 3 0V1215.11z"/><path d="M1563.27 1211.18V1189.94a1.5 1.5 0 0 1 3 0V1211.18z"/><path d="M1570.41 1216.03V1188.44a1.5 1.5 0 0 1 3 0V1216.03z"/><path d="M1577.55 1203.25V1173.40a1.5 1.5 0 0 1 3 0V1203.25z"/><path d="M1584.69 1219.96V1191.61a1.5 1.5 0 0 1 3 0V1219.96z"/><path d="M1591.83 1204.92V1180.50a1.5 1.5 0 0 1 3 0V1204.92z"/><path d="M1598.97 1214.11V1184.51a1.5 1.5 0 0 1 3 0V1214.11z"/><path d="M1606.11 1210.35V1177.41a1.5 1.5 0 0 1 3 0V1210.35z"/><path d="M1613.25 1211.18V1187.60a1.5 1.5 0 0 1 3 0V1211.18z"/><path d="M1620.39 1206.34V1178.91a1.5 1.5 0 0 1 3 0V1206.34z"/><path d="M1627.54 1212.86V1182.84a1.5 1.5 0 0 1 3 0V1212.86z"/><path d="M1634.68 1211.18V1185.35a1.5 1.5 0 0 1 3 0V1211.18z"/><path d="M1641.82 1208.84V1181.33a1.5 1.5 0 0 1 3 0V1208.84z"/><path d="M1648.96 1219.12V1186.01a1.5 1.5 0 0 1 3 0V1219.12z"/><path d="M1656.10 1208.84V1179.75a1.5 1.5 0 0 1 3 0V1208.84z"/><path d="M1663.24 1211.18V1185.18a1.5 1.5 0 0 1 3 0V1211.18z"/><path d="M1670.38 1211.18V1175.74a1.5 1.5 0 0 1 3 0V1211.18z"/><path d="M1677.52 1213.52V1184.68a1.5 1.5 0 0 1 3 0V1213.52z"/><path d="M1684.66 1205.50V1184.51a1.5 1.5 0 0 1 3 0V1205.50z"/><path d="M1691.81 1212.86V1187.60a1.5 1.5 0 0 1 3 0V1212.86z"/><path d="M1698.95 1211.18V1188.44a1.5 1.5 0 0 1 3 0V1211.18z"/><path d="M1706.09 1212.02V1185.35a1.5 1.5 0 0 1 3 0V1212.02z"/><path d="M1713.23 1216.03V1183.67a1.5 1.5 0 0 1 3 0V1216.03z"/><path d="M1720.37 1213.52V1179.75a1.5 1.5 0 0 1 3 0V1213.52z"/><path d="M1727.51 1213.52V1186.77a1.5 1.5 0 0 1 3 0V1213.52z"/><path d="M1734.65 1205.50V1170.89a1.5 1.5 0 0 1 3 0V1205.50z"/><path d="M1741.79 1208.01V1181.33a1.5 1.5 0 0 1 3 0V1208.01z"/><path d="M1748.93 1221.38V1186.77a1.5 1.5 0 0 1 3 0V1221.38z"/><path d="M1756.07 1212.86V1178.91a1.5 1.5 0 0 1 3 0V1212.86z"/><path d="M1763.22 1216.03V1195.63a1.5 1.5 0 0 1 3 0V1216.03z"/><path d="M1770.36 1213.52V1192.45a1.5 1.5 0 0 1 3 0V1213.52z"/><path d="M1777.50 1210.35V1174.90a1.5 1.5 0 0 1 3 0V1210.35z"/><path d="M1784.64 1213.52V1187.60a1.5 1.5 0 0 1 3 0V1213.52z"/><path d="M1791.78 1215.11V1189.11a1.5 1.5 0 0 1 3 0V1215.11z"/><path d="M1798.92 1215.11V1188.44a1.5 1.5 0 0 1 3 0V1215.11z"/><path d="M1806.06 1197.81V1170.30a1.5 1.5 0 0 1 3 0V1197.81z"/><path d="M1813.20 1212.02V1176.57a1.5 1.5 0 0 1 3 0V1212.02z"/><path d="M1820.34 1218.29V1188.44a1.5 1.5 0 0 1 3 0V1218.29z"/><path d="M1827.48 1221.38V1193.03a1.5 1.5 0 0 1 3 0V1221.38z"/><path d="M1834.62 1212.86V1173.40a1.5 1.5 0 0 1 3 0V1212.86z"/><path d="M1841.77 1200.91V1174.90a1.5 1.5 0 0 1 3 0V1200.91z"/><path d="M1848.91 1212.02V1186.77a1.5 1.5 0 0 1 3 0V1212.02z"/><path d="M1856.05 1212.86V1172.56a1.5 1.5 0 0 1 3 0V1212.86z"/><path d="M1863.19 1203.25V1166.29a1.5 1.5 0 0 1 3 0V1203.25z"/><path d="M1870.33 1211.18V1176.57a1.5 1.5 0 0 1 3 0V1211.18z"/><path d="M1877.47 1205.50V1179.75a1.5 1.5 0 0 1 3 0V1205.50z"/><path d="M1884.61 1209.68V1185.76a1.5 1.5 0 0 1 3 0V1209.68z"/><path d="M1891.75 1214.11V1193.03a1.5 1.5 0 0 1 3 0V1214.11z"/><path d="M1898.89 1209.68V1170.30a1.5 1.5 0 0 1 3 0V1209.68z"/><path d="M1906.04 1219.12V1193.03a1.5 1.5 0 0 1 3 0V1219.12z"/><path d="M1913.18 1200.91V1175.74a1.5 1.5 0 0 1 3 0V1200.91z"/><path d="M1920.32 1214.03V1184.43a1.5 1.5 0 0 1 3 0V1214.03z"/><path d="M1927.46 1204.00V1184.43a1.5 1.5 0 0 1 3 0V1204.00z"/></g></g>
</svg>
<div class="leg" style="left:1558px;width:177px"><div class="sw" style="background:#6bd0a0"></div></div>
<span class="abs" id="t_legA" style="left:1615.00px;top:1323.08px;font-size:24px;color:#71717a;letter-spacing:0.71px">Allowed</span>
<div class="leg" style="left:1755px;width:178px"><div class="sw" style="background:#f2bf4b"></div></div>
<span class="abs" id="t_legB" style="left:1810.60px;top:1323.08px;font-size:24px;color:#71717a;letter-spacing:0.91px">Blocked</span>
</section>
<section>
<div class="box" style="left:47px;top:1480px;width:960px;height:300px"></div>
<h2 class="abs" id="t_TopA" style="left:114.00px;top:1545.49px;font-size:32.5px;color:#3f3f46;letter-spacing:0.29px;transform:scaleX(1.04);transform-origin:0 0;-webkit-text-stroke:0.6px #3f3f46">Top Users (Allowed)</h2>
<div class="box" style="left:1071px;top:1480px;width:960px;height:300px"></div>
<h2 class="abs" id="t_TopB" style="left:1138.00px;top:1545.49px;font-size:32.5px;color:#3f3f46;letter-spacing:0.18px;transform:scaleX(1.04);transform-origin:0 0;-webkit-text-stroke:0.6px #3f3f46">Top Users (Blocked)</h2>
</section>
</main>
</body>
</html>
